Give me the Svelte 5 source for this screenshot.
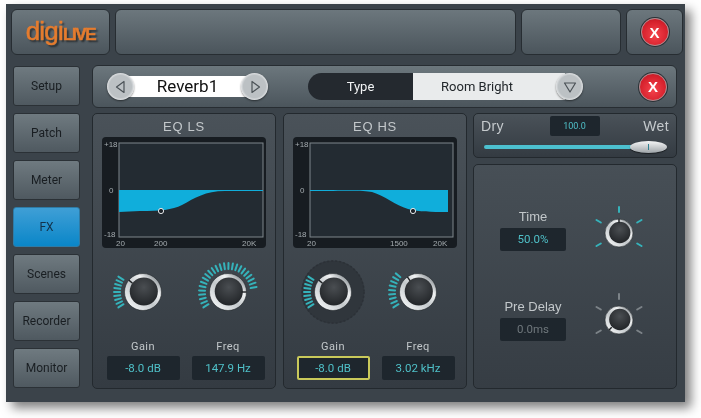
<script>
  const navItems = ['Setup', 'Patch', 'Meter', 'FX', 'Scenes', 'Recorder', 'Monitor'];

  // tick marks around a knob, angles in degrees clockwise from straight up
  function ticks(from, to, count) {
    const out = [];
    for (let i = 0; i < count; i++) {
      const deg = from + ((to - from) * i) / (count - 1);
      const rad = (deg * Math.PI) / 180;
      out.push({ sin: Math.sin(rad), cos: Math.cos(rad) });
    }
    return out;
  }

  function polar(r, deg) {
    const rad = (deg * Math.PI) / 180;
    return { x: 40 + r * Math.sin(rad), y: 40 - r * Math.cos(rad) };
  }

  const eqPanels = [
    {
      title: 'EQ LS',
      curve: 'M119 190 H263 V191 H225 C205 191 195 198 182 205 C172 210 160 211 140 211 L119 212 Z',
      dot: 161,
      mid: { x: 163, label: '200' },
      knobs: [
        { label: 'Gain', value: '-8.0 dB', pointer: -50, marks: ticks(-122, -58, 9) },
        { label: 'Freq', value: '147.9 Hz', pointer: 90, marks: ticks(-122, 80, 24) }
      ]
    },
    {
      title: 'EQ HS',
      curve: 'M310 190 H448 V212 C430 212 420 212 408 209 C395 205 385 196 372 192 C362 190 345 191 310 191 Z',
      dot: 413,
      mid: { x: 402, label: '1500' },
      knobs: [
        { label: 'Gain', value: '-8.0 dB', pointer: -50, marks: ticks(-122, -58, 9), active: true },
        { label: 'Freq', value: '3.02 kHz', pointer: -35, marks: ticks(-122, -50, 9) }
      ]
    }
  ];
</script>

{#snippet knob(r, pointer, marks, tickR, tickLen, color, halo)}
  <svg class="knob" viewBox="0 0 80 80" width="80" height="80">
    <defs>
      <linearGradient id="ring" x1="0.1" y1="0.9" x2="0.85" y2="0.1">
        <stop offset="0" stop-color="#f4f6f7" />
        <stop offset="0.45" stop-color="#c3c8cb" />
        <stop offset="0.75" stop-color="#f0f2f3" />
        <stop offset="1" stop-color="#8d9397" />
      </linearGradient>
      <radialGradient id="cap" cx="0.5" cy="0.35" r="0.7">
        <stop offset="0" stop-color="#4a4e52" />
        <stop offset="1" stop-color="#1f2225" />
      </radialGradient>
    </defs>
    {#if halo}
      <circle cx="40" cy="40" r="25" fill="none" stroke="#30363c" stroke-width="13" />
      <circle cx="40" cy="40" r="31" fill="none" stroke="#2c3137" stroke-width="1.5" stroke-dasharray="2 2" />
    {/if}
    {#each marks as m}
      <line
        x1={40 + tickR * m.sin}
        y1={40 - tickR * m.cos}
        x2={40 + (tickR + tickLen) * m.sin}
        y2={40 - (tickR + tickLen) * m.cos}
        stroke={color}
        stroke-width="2"
        stroke-linecap="round"
      />
    {/each}
    <circle cx="40" cy="40" {r} fill="url(#ring)" stroke="#23282c" stroke-width="0.6" />
    <circle cx={40.8} cy={39.5} r={r * 0.76} fill="url(#cap)" />
    <line
      x1={polar(r * 0.74, pointer).x}
      y1={polar(r * 0.74, pointer).y}
      x2={polar(r, pointer).x}
      y2={polar(r, pointer).y}
      stroke="#1d2023"
      stroke-width="1.4"
    />
  </svg>
{/snippet}

{#snippet closeButton()}
  <div class="close"><span>X</span></div>
{/snippet}

{#snippet roundButton(points)}
  <div class="round">
    <svg viewBox="0 0 16 16" width="16" height="16">
      <polygon {points} fill="none" stroke="#4b5257" stroke-width="1.2" stroke-linejoin="round" />
    </svg>
  </div>
{/snippet}

<div class="page">
  <div class="screen">
    <div class="topbar">
      <div class="box logo-box">
        <div class="logo">digi<span>LIVE</span></div>
      </div>
      <div class="box wide"></div>
      <div class="box mid"></div>
      <div class="box close-box">{@render closeButton()}</div>
    </div>

    <div class="body">
      <nav class="sidebar">
        {#each navItems as item}
          <div class="nav" class:active={item === 'FX'}>{item}</div>
        {/each}
      </nav>

      <div class="main">
        <div class="header">
          <div class="preset">
            {@render roundButton('11,2.5 11,13.5 3.5,8')}
            <div class="preset-name">Reverb1</div>
            {@render roundButton('5,2.5 5,13.5 12.5,8')}
          </div>
          <div class="type">
            <div class="type-label">Type</div>
            <div class="type-value">Room Bright</div>
            {@render roundButton('2.5,4 13.5,4 8,13')}
          </div>
          {@render closeButton()}
        </div>

        <div class="panels">
          {#each eqPanels as eq, p}
            <section class="panel eq">
              <h3>{eq.title}</h3>
              <div class="graph">
                <svg viewBox="{p ? 293 : 102} 137 166 111" width="166" height="111">
                  {#if p === 0}
                    <rect x="119" y="143" width="144" height="94" fill="#232b32" stroke="#7e868b" />
                    <path d={eq.curve} fill="#10aedb" />
                    <line x1="225" y1="190.5" x2="260" y2="190.5" stroke="#10aedb" />
                    <text x="104" y="147" class="ax">+18</text>
                    <text x="109" y="193" class="ax">0</text>
                    <text x="104" y="237" class="ax">-18</text>
                    <text x="116" y="246" class="ax">20</text>
                    <text x={eq.mid.x - 9} y="246" class="ax">{eq.mid.label}</text>
                    <text x="242" y="246" class="ax">20K</text>
                  {:else}
                    <rect x="310" y="143" width="143" height="94" fill="#232b32" stroke="#7e868b" />
                    <path d={eq.curve} fill="#10aedb" />
                    <text x="295" y="147" class="ax">+18</text>
                    <text x="300" y="193" class="ax">0</text>
                    <text x="295" y="237" class="ax">-18</text>
                    <text x="307" y="246" class="ax">20</text>
                    <text x={eq.mid.x - 12} y="246" class="ax">{eq.mid.label}</text>
                    <text x="433" y="246" class="ax">20K</text>
                  {/if}
                  <circle cx={eq.dot} cy="211" r="2.6" fill="#1d2329" stroke="#e6e8ea" stroke-width="1" />
                </svg>
              </div>
              <div class="controls">
                {#each eq.knobs as k}
                  <div class="control">
                    {@render knob(18.5, k.pointer, k.marks, 23, 6, '#35b3bb', k.active)}
                    <div class="label">{k.label}</div>
                    <div class="value" class:selected={k.active}>{k.value}</div>
                  </div>
                {/each}
              </div>
            </section>
          {/each}

          <div class="right">
            <section class="panel mix">
              <div class="mix-row">
                <span>Dry</span>
                <div class="mix-value">100.0</div>
                <span>Wet</span>
              </div>
              <div class="slider">
                <div class="thumb"><i></i></div>
              </div>
            </section>

            <section class="panel params">
              <div class="param">
                <div class="param-text">
                  <div class="label big">Time</div>
                  <div class="value wide-value">50.0%</div>
                </div>
                {@render knob(14, 0, ticks(-120, 120, 5), 21, 5, '#35b3bb', false)}
              </div>
              <div class="param">
                <div class="param-text">
                  <div class="label big">Pre Delay</div>
                  <div class="value wide-value dim">0.0ms</div>
                </div>
                {@render knob(14, -135, ticks(-120, 120, 5), 21, 5, '#7c8388', false)}
              </div>
            </section>
          </div>
        </div>
      </div>
    </div>
  </div>
</div>

<style>
  :global(body) {
    margin: 0;
    background: #fff;
  }

  .page {
    width: 701px;
    height: 418px;
    padding: 4px 0 0 6px;
    box-sizing: border-box;
    overflow: hidden;
    background: #fff;
    font-family: Roboto, "Liberation Sans", sans-serif;
  }

  .screen {
    width: 679px;
    height: 398px;
    padding: 5px 2px 0 5px;
    box-sizing: border-box;
    background: #3b434a;
    box-shadow: 6px 6px 10px rgba(0, 0, 0, 0.5);
    filter: blur(0.35px);
  }

  .topbar {
    display: flex;
    gap: 5px;
    height: 46px;
  }

  .box {
    box-sizing: border-box;
    display: flex;
    align-items: center;
    justify-content: center;
    border: 1px solid #272d32;
    border-radius: 6px;
    background: linear-gradient(#6c777d, #4b555c);
  }

  .logo-box { width: 99px; }
  .wide { width: 402px; }
  .mid { width: 100px; }
  .close-box { width: 57px; }

  .logo {
    font-family: "Liberation Sans", sans-serif;
    font-size: 26px;
    letter-spacing: -0.8px;
    color: #e57c2e;
    -webkit-text-stroke: 0.5px #e57c2e;
    text-shadow: 2px 2px 2px rgba(0, 0, 0, 0.55);
    line-height: 1;
    margin-top: -3px;
  }

  .logo span {
    font-size: 17px;
    font-weight: 700;
    letter-spacing: -1.4px;
  }

  .close {
    flex: none;
    width: 28px;
    height: 28px;
    box-sizing: border-box;
    display: flex;
    align-items: center;
    justify-content: center;
    border-radius: 50%;
    border: 1px solid #b9868a;
    background: radial-gradient(circle at 50% 60%, #f5434c, #d5202c 65%, #a31a24);
    box-shadow: 0 0 0 1px #2a3035;
    color: #fff;
    font-family: "Liberation Sans", sans-serif;
    font-size: 15px;
    font-weight: 700;
  }

  .body {
    display: flex;
    gap: 12px;
    margin-top: 10px;
    padding-left: 2px;
  }

  .sidebar {
    width: 67px;
    display: flex;
    flex-direction: column;
    gap: 7px;
    margin-top: 1px;
  }

  .nav {
    box-sizing: border-box;
    height: 40px;
    display: flex;
    align-items: center;
    justify-content: center;
    border: 1px solid #2b3136;
    border-radius: 3px;
    background: linear-gradient(#6f7a80, #4f5960);
    color: #191e22;
    font-size: 12px;
  }

  .nav.active {
    border-color: #2e7ba6;
    background: linear-gradient(#3f9fd6, #0a86c8);
    color: #12324a;
  }

  .main {
    width: 585px;
  }

  .header {
    box-sizing: border-box;
    height: 43px;
    display: flex;
    align-items: center;
    padding: 0 9px 0 14px;
    border: 1px solid #272d32;
    border-radius: 6px;
    background: linear-gradient(#6c777d, #4b555c);
  }

  .round {
    flex: none;
    width: 27px;
    height: 27px;
    display: flex;
    align-items: center;
    justify-content: center;
    border-radius: 50%;
    background: radial-gradient(circle at 50% 50%, #bcc1c4 58%, #f2f3f4 78%, #c6cbce);
    box-shadow: 0 1px 2px rgba(0, 0, 0, 0.5);
    position: relative;
  }

  .preset {
    display: flex;
    align-items: center;
    width: 161px;
  }

  .preset-name {
    flex: 1;
    height: 21px;
    margin: 0 -6px;
    background: #fff;
    color: #111;
    font-size: 17px;
    line-height: 21px;
    text-align: center;
  }

  .type {
    display: flex;
    align-items: center;
    width: 275px;
    margin-left: 40px;
    margin-right: auto;
    height: 27px;
  }

  .type-label {
    width: 105px;
    height: 27px;
    border-radius: 14px 0 0 14px;
    background: #24292f;
    color: #f1f3f4;
    font-size: 13px;
    line-height: 27px;
    text-align: center;
  }

  .type-value {
    flex: 1;
    height: 27px;
    margin-right: -9px;
    padding-right: 24px;
    background: #e9ebec;
    color: #22272b;
    font-size: 13px;
    line-height: 27px;
    text-align: center;
  }

  .panels {
    display: flex;
    gap: 7px;
    margin-top: 5px;
    height: 276px;
  }

  .panel {
    box-sizing: border-box;
    border: 1px solid #23292e;
    border-radius: 5px;
    background: linear-gradient(#4a5259, #343b42);
  }

  .eq {
    width: 184px;
    padding: 0 9px;
  }

  h3 {
    margin: 5px 0 0;
    height: 18px;
    font-family: "Liberation Sans", sans-serif;
    font-size: 13px;
    font-weight: 400;
    line-height: 16px;
    letter-spacing: 0.7px;
    text-align: center;
    color: #c3c8cb;
  }

  .graph {
    height: 111px;
    border-radius: 4px;
    background: #171c21;
    overflow: hidden;
  }

  .graph svg {
    display: block;
  }

  .ax {
    font-family: "Liberation Sans", sans-serif;
    font-size: 8px;
    fill: #a4abaf;
  }

  .controls {
    display: flex;
    gap: 13px;
    margin: 4px 0 0 4px;
  }

  .eq:first-child .controls {
    margin-left: 5px;
  }

  .control {
    width: 72px;
    display: flex;
    flex-direction: column;
    align-items: center;
  }

  .knob {
    display: block;
    flex: none;
    overflow: visible;
  }

  .label {
    margin-top: 7px;
    height: 15px;
    color: #c2c7ca;
    font-size: 11px;
    line-height: 15px;
    letter-spacing: 0.4px;
  }

  .value {
    box-sizing: border-box;
    width: 73px;
    height: 24px;
    margin-top: 2px;
    border-radius: 2px;
    background: #1e262d;
    color: #4fc0c8;
    font-size: 11.5px;
    line-height: 24px;
    text-align: center;
  }

  .value.selected {
    border: 2px solid #c9c95a;
    line-height: 20px;
  }

  .right {
    width: 204px;
    margin-left: -1px;
    display: flex;
    flex-direction: column;
    gap: 6px;
  }

  .mix {
    height: 45px;
    padding: 2px 7px 0 7px;
  }

  .mix-row {
    display: flex;
    align-items: center;
    justify-content: space-between;
    color: #c5cacd;
    font-family: "Liberation Sans", sans-serif;
    font-size: 14px;
    letter-spacing: 0.4px;
  }

  .mix-value {
    width: 50px;
    height: 20px;
    margin-left: 4px;
    margin-right: 2px;
    border-radius: 2px;
    background: #1e262d;
    color: #4fc0c8;
    font-family: Roboto, sans-serif;
    font-size: 9px;
    letter-spacing: 0;
    line-height: 20px;
    text-align: center;
  }

  .slider {
    position: relative;
    height: 4px;
    width: 150px;
    margin: 9px 0 0 3px;
    border-radius: 2px;
    background: #4cc0cf;
  }

  .thumb {
    position: absolute;
    left: 146px;
    top: -4px;
    width: 37px;
    height: 12px;
    display: flex;
    align-items: center;
    justify-content: center;
    border-radius: 50%;
    background: linear-gradient(#f4f5f6, #9ea4a8);
    box-shadow: 0 1px 1px rgba(0, 0, 0, 0.5);
  }

  .thumb i {
    width: 1.5px;
    height: 6px;
    background: #2f7f90;
  }

  .params {
    flex: 1;
    display: flex;
    flex-direction: column;
    gap: 7px;
    padding: 28px 0 0 26px;
    background: linear-gradient(#474f56, #363d44);
  }

  .param {
    display: flex;
    align-items: center;
    gap: 13px;
    height: 80px;
  }

  .param-text {
    width: 66px;
    display: flex;
    flex-direction: column;
    align-items: center;
    margin-bottom: 7px;
  }

  .param + .param .param-text {
    margin-bottom: 1px;
  }

  .label.big {
    font-family: "Liberation Sans", sans-serif;
    font-size: 13px;
    letter-spacing: 0;
    white-space: nowrap;
    margin: 0;
    height: 18px;
    line-height: 18px;
  }

  .wide-value {
    width: 66px;
    height: 23px;
    line-height: 23px;
    margin-top: 2px;
  }

  .dim {
    color: #6f777c;
  }
</style>
